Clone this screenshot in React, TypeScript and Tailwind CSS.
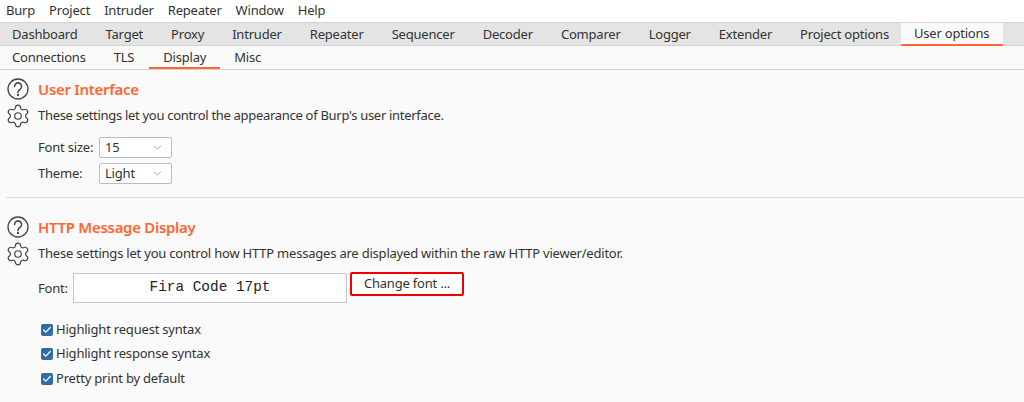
import React from 'react';
import { Check, ChevronDown, Settings } from 'lucide-react';

const menus = ['Burp', 'Project', 'Intruder', 'Repeater', 'Window', 'Help'];
const tabs = ['Dashboard', 'Target', 'Proxy', 'Intruder', 'Repeater', 'Sequencer', 'Decoder', 'Comparer', 'Logger', 'Extender', 'Project options'];
const checks = ['Highlight request syntax', 'Highlight response syntax', 'Pretty print by default'];

const HelpIcon = () => (
  <svg viewBox="0 0 22 22" className="w-[22px] h-[22px] shrink-0" fill="none" stroke="#444" strokeWidth="1.3" strokeLinecap="round">
    <circle cx="11" cy="11" r="10" />
    <path d="M7.6 8.4a3.5 3.5 0 1 1 5.6 2.8c-1.3 1-2.2 1.6-2.2 3.2" strokeWidth="1.5" />
    <circle cx="11" cy="17" r="0.5" fill="#444" />
  </svg>
);

const SectionHead: React.FC<{ title: string; text: string; textClass: string }> = ({ title, text, textClass }) => (
  <div className="flex flex-col gap-[5px] pl-px">
    <div className="flex items-center gap-[9px] h-[22px]">
      <HelpIcon />
      <h2 className="text-[15px] font-semibold tracking-[-0.3px] text-[#ff6633]">{title}</h2>
    </div>
    <div className="flex items-center gap-[7px] h-[22px] -ml-[2px]">
      <Settings className="w-[26px] h-[26px] text-[#444] shrink-0" strokeWidth={1.1} />
      <p className={textClass}>{text}</p>
    </div>
  </div>
);

const Select: React.FC<{ value: string }> = ({ value }) => (
  <div className="w-[73px] h-[21px] bg-white border border-[#b9bcc4] rounded-[2px] flex items-center justify-between pl-[5px] pr-[7px]">
    <span>{value}</span>
    <ChevronDown className="w-[13px] h-[13px] text-[#777]" strokeWidth={1.3} />
  </div>
);

const App: React.FC = () => {
  return (
    <div className="w-[1024px] h-[402px] overflow-hidden bg-[#fafafa] text-[13px] tracking-[-0.2px] text-[#333] font-['Noto_Sans',sans-serif]">
      <div className="h-[22px] bg-white flex items-center pl-[6px] gap-[14px]">
        {menus.map((m) => <span key={m}>{m}</span>)}
      </div>
      <div className="h-[24px] bg-[#e4e4e4] border-y border-[#d4d4d4] flex pl-[12px]">
        {tabs.map((t) => <span key={t} className="mr-[28px] leading-[22px] whitespace-nowrap">{t}</span>)}
        <span className="-ml-[16px] px-[13px] w-[102px] h-[23px] bg-[#fafafa] border-b-2 border-[#ff6633] leading-[21px] whitespace-nowrap">User options</span>
      </div>
      <div className="h-[24px] border-b border-[#d4d4d4] flex pl-[12px]">
        <span className="mr-[28px] leading-[22px]">Connections</span>
        <span className="mr-[15px] leading-[22px]">TLS</span>
        <span className="px-[14px] border-b-2 border-[#ff6633] leading-[22px] h-[23px]">Display</span>
        <span className="ml-[14px] leading-[22px]">Misc</span>
      </div>
      <div className="px-[6px] pt-[8px]">
        <SectionHead title="User Interface" text="These settings let you control the appearance of Burp's user interface." textClass="tracking-[-0.3px]" />
        <div className="pl-[32px] pt-[10px] flex flex-col gap-[5px]">
          <div className="flex items-center"><span className="w-[61px]">Font size:</span><Select value="15" /></div>
          <div className="flex items-center"><span className="w-[61px]">Theme:</span><Select value="Light" /></div>
        </div>
        <div className="h-px bg-[#dcdcdc] mt-[13px] mr-[-6px]" />
        <div className="pt-[18px]">
          <SectionHead title="HTTP Message Display" text="These settings let you control how HTTP messages are displayed within the raw HTTP viewer/editor." textClass="tracking-[-0.21px]" />
        </div>
        <div className="pl-[32px] pt-[8px] flex items-start">
          <span className="w-[35px] leading-[30px]">Font:</span>
          <div className="w-[274px] h-[30px] bg-white border border-[#c4c6cc] flex items-center justify-center font-['Liberation_Mono',monospace] text-[14.4px] tracking-normal text-[#222]">Fira Code 17pt</div>
          <button className="ml-[3px] -mt-px w-[114px] h-[24px] bg-white border-2 border-[#f00000] rounded-[2px] text-[13px]">Change font ...</button>
        </div>
        <div className="pl-[35px] pt-[17px] flex flex-col gap-[5.5px]">
          {checks.map((c) => (
            <div key={c} className="flex items-center gap-[3px] h-[19px]">
              <span className="w-[12px] h-[12px] bg-[#2f6ea5] rounded-[2px] flex items-center justify-center">
                <Check className="w-[10px] h-[10px] text-white" strokeWidth={3} />
              </span>
              <span>{c}</span>
            </div>
          ))}
        </div>
      </div>
    </div>
  );
};

export default App;
